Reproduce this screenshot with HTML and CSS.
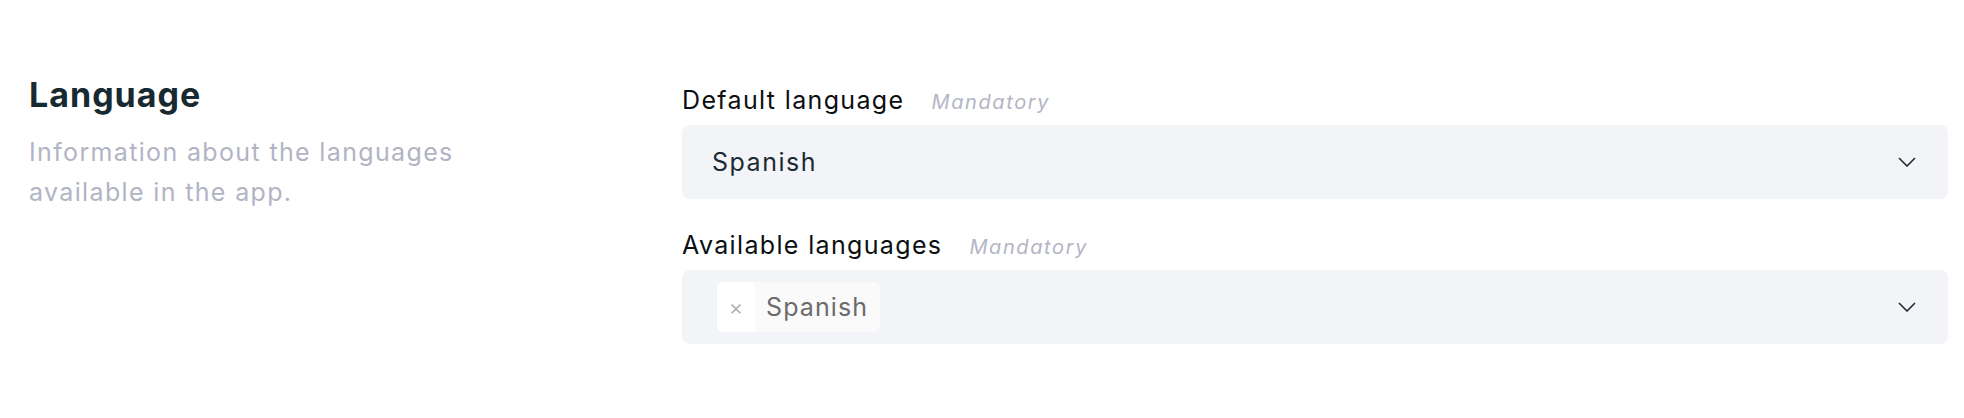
FILE: index.html
```html
<!DOCTYPE html>
<html lang="en">
<head>
<meta charset="utf-8">
<title>Language</title>
<link rel="stylesheet" href="styles.css">
</head>
<body>
<section class="section">
  <div class="intro">
    <h2 class="intro-title">Language</h2>
    <p class="intro-desc">Information about the languages available in the app.</p>
  </div>
  <div class="fields">
    <div class="field">
      <div class="field-label"><span class="label-text">Default language</span><span class="label-hint">Mandatory</span></div>
      <div class="select">
        <div class="select-value"><span class="single-value">Spanish</span></div>
        <svg class="chevron" width="18" height="10" viewBox="0 0 18 10"><polyline points="1,1 9,9 17,1" fill="none" stroke="#1c2b33" stroke-width="1.6"/></svg>
      </div>
    </div>
    <div class="field">
      <div class="field-label"><span class="label-text">Available languages</span><span class="label-hint">Mandatory</span></div>
      <div class="select">
        <div class="select-value multi">
          <div class="chip"><span class="chip-remove">×</span><span class="chip-label">Spanish</span></div>
        </div>
        <svg class="chevron" width="18" height="10" viewBox="0 0 18 10"><polyline points="1,1 9,9 17,1" fill="none" stroke="#1c2b33" stroke-width="1.6"/></svg>
      </div>
    </div>
  </div>
</section>
</body>
</html>
```

FILE: styles.css
```css
html, body {
  margin: 0;
  padding: 0;
  background: #ffffff;
}

body {
  font-family: Inter, "Noto Sans", sans-serif;
  width: 1964px;
  height: 418px;
  overflow: hidden;
}

.section {
  display: grid;
  grid-template-columns: 653px 1fr;
  padding: 74px 16px 0 29px;
}

.intro-title {
  margin: 0;
  font-size: 34px;
  line-height: 42px;
  font-weight: 700;
  letter-spacing: 1px;
  color: #182a31;
}

.intro-desc {
  margin: 16px 0 0;
  max-width: 500px;
  font-size: 25px;
  line-height: 40px;
  letter-spacing: 1.35px;
  color: #b2b4c4;
}

.fields {
  padding-top: 11px;
  display: flex;
  flex-direction: column;
  gap: 31px;
}

.field-label {
  display: flex;
  align-items: baseline;
  gap: 27px;
  line-height: 30px;
}

.label-text {
  font-size: 25px;
  letter-spacing: 1.35px;
  color: #0b0f12;
}

.label-hint {
  font-size: 20px;
  font-style: italic;
  letter-spacing: 1.6px;
  color: #b3b5c5;
}

.select {
  margin-top: 8px;
  height: 74px;
  border-radius: 8px;
  background: #f3f4f8;
  display: flex;
  align-items: center;
  padding: 0 32px 0 30px;
}

.select-value {
  flex: 1;
  display: flex;
  align-items: center;
}

.select-value.multi {
  padding-left: 5px;
}

.single-value {
  font-size: 25px;
  letter-spacing: 1.5px;
  color: #1c2b33;
}

.chevron {
  display: block;
}

.chip {
  display: flex;
  height: 50px;
  border-radius: 6px;
  overflow: hidden;
  background: #fafafb;
}

.chip-remove {
  width: 38px;
  display: flex;
  align-items: center;
  justify-content: center;
  background: #ffffff;
  color: #a8a8a8;
  font-size: 22px;
  font-weight: 300;
}

.chip-label {
  display: flex;
  align-items: center;
  padding: 0 12px 0 11px;
  font-size: 25px;
  letter-spacing: 1.1px;
  color: #6b6b6b;
}
```
